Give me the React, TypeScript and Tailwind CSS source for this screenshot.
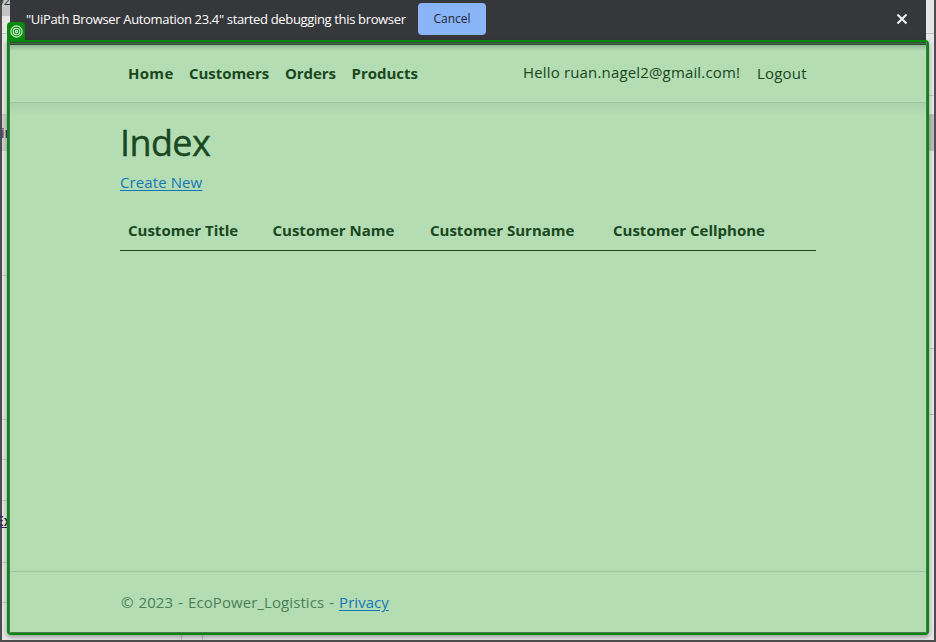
const leftLines = [33, 114, 150, 275, 419, 459, 500, 562, 602];
const rightLines = [33, 95, 114, 150, 348, 414];

function Backdrop() {
  return (
    <div className="absolute inset-0 overflow-hidden bg-[#4d4d4d]">
      <div className="absolute top-0 bottom-[2px] left-[2px] right-[2px] bg-[#e6e6e6]" />
      <div className="absolute left-[2px] top-0 h-4 w-2 bg-[#c4c4c4]" />
      <div className="absolute left-[2px] top-[114px] h-9 w-2 bg-[#cfcfcf]" />
      <div className="absolute right-[2px] top-[114px] h-9 w-2 bg-[#bdbdbd]" />
      {leftLines.map((y) => (
        <div key={y} className="absolute left-[2px] h-px w-2 bg-[#c8c8c8]" style={{ top: y }} />
      ))}
      {rightLines.map((y) => (
        <div key={y} className="absolute right-[2px] h-px w-2 bg-[#c4c4c4]" style={{ top: y }} />
      ))}
      <div className="absolute bottom-[2px] left-[181px] h-2 w-px bg-[#bfbfbf]" />
      <div className="absolute bottom-[2px] left-[202px] h-2 w-px bg-[#bfbfbf]" />
      <span className="absolute left-[-3px] top-[-6px] text-[12px] leading-[14px] text-[#333]">92</span>
      <span className="absolute left-[1px] top-[125px] text-[14px] leading-4 text-[#28205c]">in</span>
      <span className="absolute left-[-4px] top-[513px] text-[14px] font-semibold leading-4 text-[#38245c] underline">Ex</span>
    </div>
  );
}

function DebugBar() {
  return (
    <div className="mx-auto flex h-10 w-[916px] items-start bg-[#36373b] pl-4 pr-[18px] text-white">
      <span className="w-[392px] whitespace-nowrap pt-[9px] text-[13px] leading-5 tracking-[-0.34px]">
        "UiPath Browser Automation 23.4" started debugging this browser
      </span>
      <button className="mt-[3px] h-8 w-[68px] rounded-[4px] bg-[#8ab4f8] text-[12px] leading-8 text-[#202734]">
        Cancel
      </button>
      <svg className="ml-auto mt-[13px] h-3 w-3" viewBox="0 0 12 12" stroke="#f1f1f1" strokeWidth="2">
        <path d="M1.5 1.5 10.5 10.5M10.5 1.5 1.5 10.5" />
      </svg>
    </div>
  );
}

export default function App() {
  return (
    <div className="relative h-[642px] w-[936px] overflow-hidden font-['Open_Sans','Noto_Sans',sans-serif] text-[#1a4720]">
      <Backdrop />
      <div className="relative">
        <DebugBar />
        <div className="ml-[7px] flex h-[595px] w-[922px] flex-col overflow-hidden rounded-b-[4px] rounded-tr-[4px] border-2 border-[#078a0b] bg-[#b4ddb4] shadow-[0_2px_5px_rgba(0,0,0,0.35)]">
          <div className="flex grow flex-col border-x border-b border-[#4b7650]">
            <div className="h-[3px] border-y border-[#2c4b30] bg-[#49704c]" />
            <header className="flex h-[58px] items-start border-b border-[#9bc5a0] bg-[linear-gradient(#91b792,#b4ddb4_6px)] pl-[118px] pt-[16px] text-[15px] leading-6">
              <nav className="flex font-bold">
                <a className="w-[61px] whitespace-nowrap tracking-[0.3px]">Home</a>
                <a className="w-24 whitespace-nowrap tracking-[-0.05px]">Customers</a>
                <a className="w-[66.5px] whitespace-nowrap tracking-[-0.1px]">Orders</a>
                <a className="w-[171.5px] whitespace-nowrap">Products</a>
              </nav>
              <span className="-mt-px w-[234px] whitespace-nowrap tracking-[0.16px]">Hello ruan.nagel2@gmail.com!</span>
              <a className="tracking-[0.2px]">Logout</a>
            </header>
            <main className="grow bg-[linear-gradient(#aad3ac,#b4ddb4_12px)] px-[110px] pt-[15px]">
              <h1 className="h-12 pt-px text-[36px] font-medium leading-[48px] tracking-[-0.6px] [-webkit-text-stroke:0.4px_#1a4720]">Index</h1>
              <a className="mt-1 block w-fit whitespace-nowrap text-[15px] leading-6 tracking-[0.1px] text-[#1677b4] underline underline-offset-2">Create New</a>
              <div className="mt-4 flex h-[41px] w-[696px] border-b border-[#1a4720] pl-2 pt-2 text-[15px] font-bold leading-6">
                <div className="w-[144.5px] whitespace-nowrap">Customer Title</div>
                <div className="w-[157.5px] whitespace-nowrap">Customer Name</div>
                <div className="w-[183px] whitespace-nowrap">Customer Surname</div>
                <div className="whitespace-nowrap">Customer Cellphone</div>
              </div>
            </main>
            <footer className="h-[61px] shrink-0 border-t border-[#9bc5a0] pl-[111px] pt-[18px] text-[15px] leading-6 tracking-[0.08px] text-[#4b8058] [word-spacing:1px]">
              © 2023 - EcoPower_Logistics - <a className="tracking-[0.05px] text-[#1677b4] underline underline-offset-2">Privacy</a>
            </footer>
          </div>
        </div>
      </div>
      <div className="absolute left-[7px] top-[22px] flex h-5 w-[18px] items-center justify-start rounded-t-[4px] bg-[#078a0b] pl-[2.5px]">
        <svg className="-mt-0.5 h-[13px] w-[13px]" viewBox="0 0 13 13" fill="none" stroke="#d9f3da" strokeWidth="1.1">
          <circle cx="6.5" cy="6.5" r="5.6" />
          <circle cx="6.5" cy="6.5" r="3.3" />
          <circle cx="6.5" cy="6.5" r="1.1" />
        </svg>
      </div>
    </div>
  );
}
